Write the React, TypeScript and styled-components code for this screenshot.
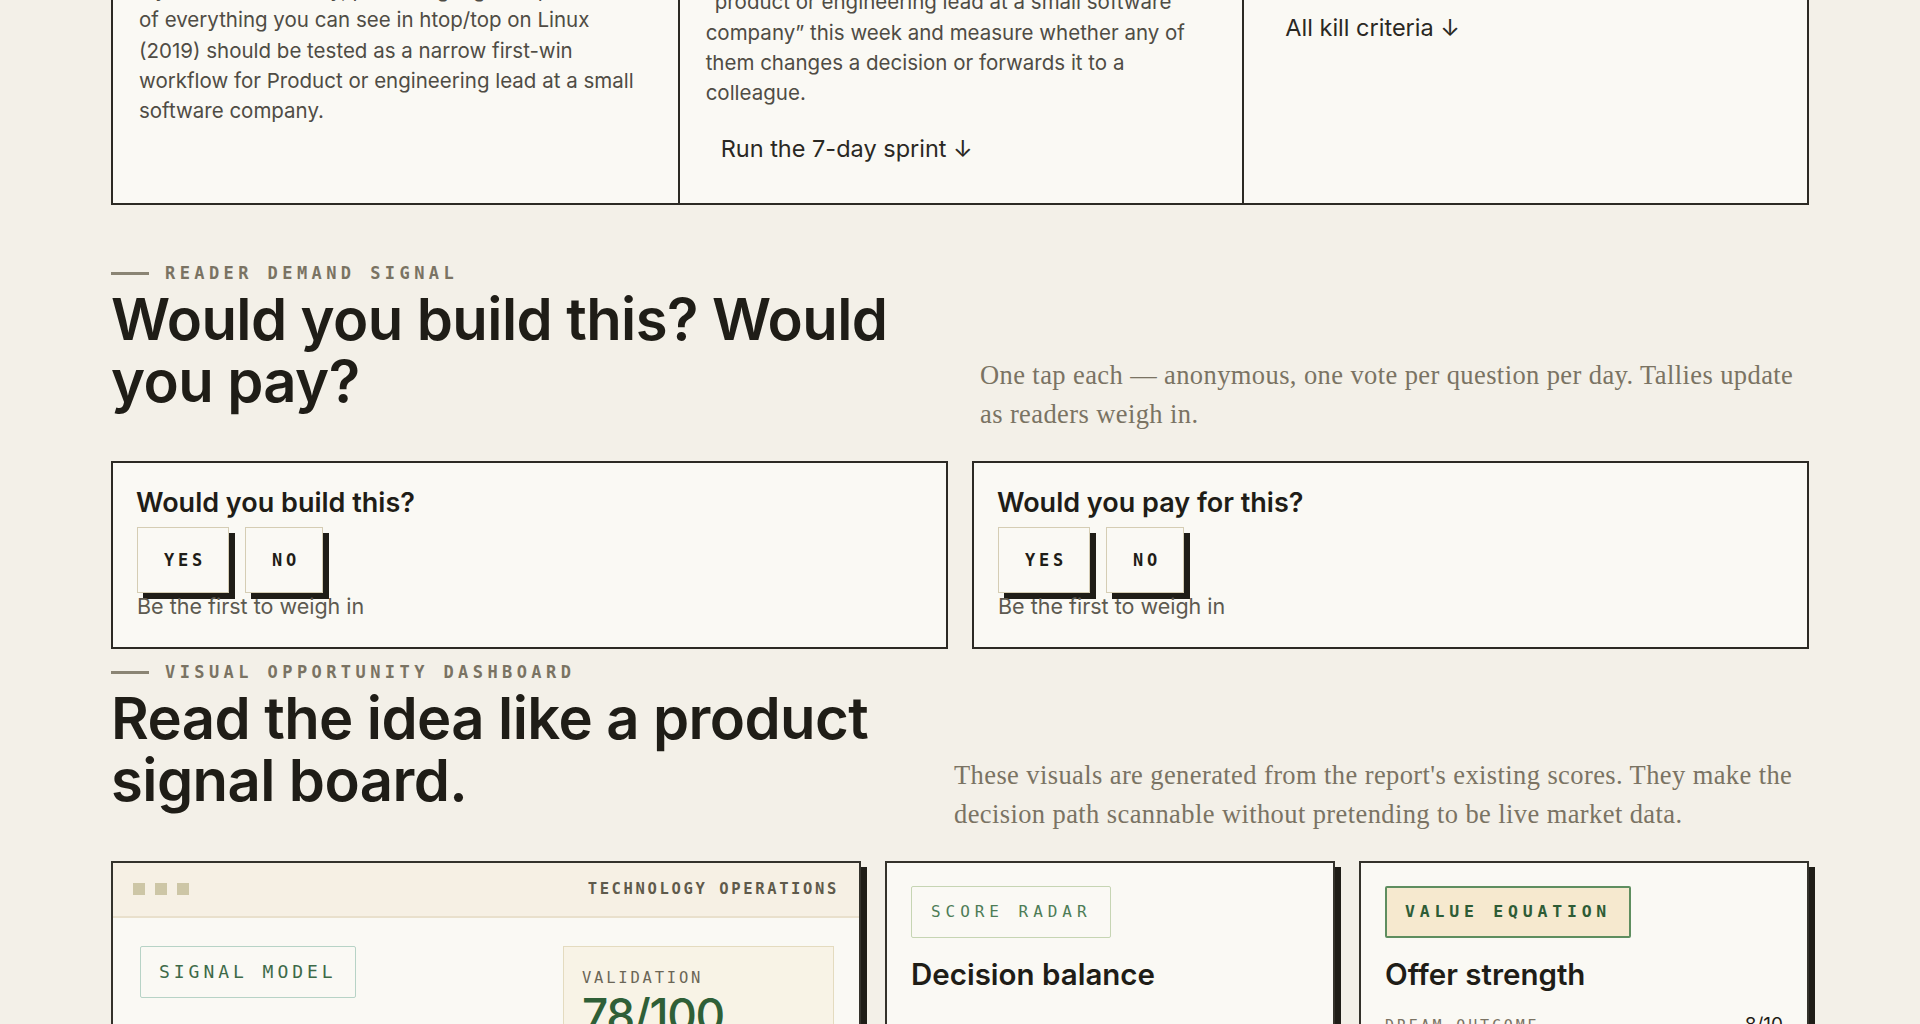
import React from "react";
import styled, { createGlobalStyle } from "styled-components";

const C = {
  bg: "#f3f0e8",
  card: "#faf9f4",
  ink: "#1f1d17",
  line: "#2c2a24",
  body: "#4f4c44",
  muted: "#7a7363",
  green: "#2f5f37",
};

const sans = `"Inter", "Liberation Sans", sans-serif`;
const mono = `"DejaVu Sans Mono", "Liberation Mono", monospace`;
const serif = `"Liberation Serif", "DejaVu Serif", serif`;

const Global = createGlobalStyle`
  html, body { margin: 0; padding: 0; background: ${C.bg}; overflow: hidden; }
  body { font-family: ${sans}; color: ${C.ink}; }
  * { box-sizing: border-box; }
`;

const Page = styled.main`
  width: 1698px;
  margin: -177px auto 0;
  padding-bottom: 200px;
`;

/* ---------- top summary grid ---------- */
const TopGrid = styled.section`
  display: grid;
  grid-template-columns: repeat(3, 1fr);
  border: 2px solid ${C.line};
  background: ${C.card};
`;

const Column = styled.div`
  display: flex;
  flex-direction: column;
  align-items: flex-start;
  padding: 28px 26px 31px;
  & + & {
    border-left: 2px solid ${C.line};
  }
`;

const ColKicker = styled.div`
  font-family: ${mono};
  font-size: 13px;
  line-height: 20px;
  letter-spacing: 0.2em;
  color: ${C.muted};
  text-transform: uppercase;
  margin-bottom: 12px;
`;

const ColTitle = styled.h3`
  margin: 0 0 12px;
  font-size: 24px;
  line-height: 30px;
  font-weight: 600;
`;

const ColText = styled.p<{ $gap?: number }>`
  margin: ${(p) => p.$gap ?? 0}px 0 0;
  font-size: 20.5px;
  line-height: 30.2px;
  color: ${C.body};
`;

const ColLink = styled.a`
  display: inline-block;
  margin-top: 18px;
  padding: 10px 15px;
  font-size: 23.5px;
  line-height: 26px;
  color: #2a2823;
  text-decoration: none;
  cursor: pointer;
`;

/* ---------- section heads ---------- */
const Section = styled.section<{ $mt: number }>`
  margin-top: ${(p) => p.$mt}px;
`;

const SectionHead = styled.div`
  display: flex;
  justify-content: space-between;
  align-items: flex-end;
  gap: 40px;
`;

const HeadMain = styled.div`
  max-width: 830px;
`;

const Eyebrow = styled.div`
  display: flex;
  align-items: center;
  gap: 16px;
  font-family: ${mono};
  font-size: 17px;
  font-weight: 700;
  line-height: 20px;
  letter-spacing: 0.26em;
  color: ${C.muted};
  text-transform: uppercase;
  &::before {
    content: "";
    width: 38px;
    height: 3px;
    background: #8a8474;
  }
`;

const H2 = styled.h2`
  margin: 6px 0 22px;
  font-size: 58px;
  line-height: 61.6px;
  font-weight: 600;
  letter-spacing: -0.01em;
  color: ${C.ink};
`;

const Lede = styled.p<{ $w: number }>`
  width: ${(p) => p.$w}px;
  flex: none;
  margin: 0;
  font-family: ${serif};
  font-size: 26.5px;
  letter-spacing: 0.4px;
  line-height: 39px;
  color: ${C.muted};
`;

/* ---------- votes ---------- */
const VoteGrid = styled.div`
  display: grid;
  grid-template-columns: 1fr 1fr;
  gap: 24px;
  margin-top: 27px;
`;

const VoteCard = styled.div`
  border: 2px solid ${C.line};
  background: ${C.card};
  padding: 24px 23px 29px;
`;

const Question = styled.h3`
  margin: 0;
  font-size: 27px;
  line-height: 32px;
  font-weight: 600;
`;

const BtnRow = styled.div`
  display: flex;
  gap: 16px;
  margin-top: 8px;
  padding-left: 1px;
`;

const VoteBtn = styled.button`
  height: 66px;
  padding: 0 22px 0 26px;
  font-family: ${mono};
  font-size: 17px;
  font-weight: 700;
  letter-spacing: 0.22em;
  color: ${C.ink};
  background: ${C.card};
  border: 1px solid #d5cdb4;
  box-shadow: 6px 6px 0 ${C.ink};
  cursor: pointer;
`;

const Hint = styled.div`
  margin-top: 1px;
  padding-left: 1px;
  font-size: 21.5px;
  line-height: 24px;
  color: #5d5a50;
`;

/* ---------- dashboard ---------- */
const DashGrid = styled.div`
  display: grid;
  grid-template-columns: 5fr 3fr 3fr;
  gap: 24px;
  margin-top: 27px;
  align-items: start;
`;

const DashCard = styled.article`
  min-height: 420px;
  border: 2px solid #34322b;
  background: ${C.card};
  box-shadow: 6px 6px 0 ${C.ink};
`;

const BoardHeader = styled.header`
  height: 55px;
  display: flex;
  align-items: center;
  justify-content: space-between;
  padding: 0 20px 0 20px;
  background: #f6f0e4;
  border-bottom: 2px solid #e9e0cc;
`;

const Dots = styled.div`
  display: flex;
  gap: 10px;
`;

const Dot = styled.span`
  width: 12px;
  height: 12px;
  background: #cdc6a6;
`;

const HeaderLabel = styled.div`
  font-family: ${mono};
  font-size: 15.5px;
  font-weight: 700;
  letter-spacing: 0.17em;
  color: #5f5a4b;
`;

const BoardBody = styled.div`
  display: flex;
  justify-content: space-between;
  align-items: flex-start;
  padding: 28px 25px 24px 27px;
`;

type ChipKind = "signal" | "radar" | "value";

const Chip = styled.div<{ $kind: ChipKind }>`
  display: inline-block;
  height: 52px;
  font-family: ${mono};
  line-height: 20px;
  border-radius: 2px;
  ${(p) =>
    p.$kind === "signal"
      ? `padding: 15px 18px; font-size: 18px; letter-spacing: 0.22em; color: #3d6a48; border: 1px solid #b7d3c6; background: transparent;`
      : p.$kind === "radar"
      ? `padding: 15px 18px 15px 19px; font-size: 16px; letter-spacing: 0.31em; color: #4d7c56; border: 1px solid #c6d5b3; background: transparent;`
      : `padding: 14px 18px; font-size: 16.5px; font-weight: 700; letter-spacing: 0.29em; color: #2e5c36; border: 2px solid #5e8e5f; background: #f6e9cf;`}
`;

const ValidationBox = styled.div`
  width: 271px;
  padding: 21px 18px 24px;
  background: #f8f3e6;
  border: 1px solid #e4dbbf;
`;

const SmallLabel = styled.div`
  font-family: ${mono};
  font-size: 15.5px;
  line-height: 20px;
  letter-spacing: 0.18em;
  color: #6b6656;
`;

const BigScore = styled.div`
  margin-top: 2px;
  font-size: 46px;
  line-height: 50px;
  font-weight: 500;
  letter-spacing: -0.03em;
  color: ${C.green};
`;

const CardPad = styled.div`
  padding: 23px 24px 24px;
`;

const CardTitle = styled.h3`
  margin: 18px 0 0;
  font-size: 29.5px;
  line-height: 36px;
  font-weight: 600;
`;

const MetricRow = styled.div`
  display: flex;
  justify-content: space-between;
  align-items: baseline;
  margin-top: 21px;
`;

const MetricLabel = styled.span`
  font-family: ${mono};
  font-size: 15px;
  letter-spacing: 0.19em;
  color: ${C.muted};
`;

const MetricValue = styled.span`
  font-size: 19px;
  color: ${C.ink};
`;

export default function App() {
  return (
    <>
      <Global />
      <Page>
        <TopGrid>
          <Column>
            <ColKicker>The wedge</ColKicker>
            <ColTitle>Start narrow</ColTitle>
            <ColText $gap={18}>
              The first version — a lightweight, explain-it-to-me
              <br />
              layer that turns noisy, plain-language snapshots
              <br />
              of everything you can see in htop/top on Linux
              <br />
              (2019) should be tested as a narrow first-win
              <br />
              workflow for Product or engineering lead at a small
              <br />
              software company.
            </ColText>
          </Column>
          <Column>
            <ColKicker>Next step</ColKicker>
            <ColTitle>Validate in a week</ColTitle>
            <ColText>
              Hand-write five digests from real machines and
              <br />
              send them to five people who match the
              <br />
              “product or engineering lead at a small software
              <br />
              company” this week and measure whether any of
              <br />
              them changes a decision or forwards it to a
              <br />
              colleague.
            </ColText>
            <ColLink>Run the 7-day sprint ↓</ColLink>
          </Column>
          <Column>
            <ColKicker>Stop signal</ColKicker>
            <ColTitle>Know when to quit</ColTitle>
            <ColText>
              If nobody forwards a digest or asks for the
              <br />
              next one within the sprint, park the idea.
            </ColText>
            <ColLink>All kill criteria ↓</ColLink>
          </Column>
        </TopGrid>

        <Section $mt={58}>
          <SectionHead>
            <HeadMain>
              <Eyebrow>Reader demand signal</Eyebrow>
              <H2>Would you build this? Would you pay?</H2>
            </HeadMain>
            <Lede $w={829}>
              One tap each — anonymous, one vote per question per day. Tallies update as readers weigh in.
            </Lede>
          </SectionHead>
          <VoteGrid>
            <VoteCard>
              <Question>Would you build this?</Question>
              <BtnRow>
                <VoteBtn>YES</VoteBtn>
                <VoteBtn>NO</VoteBtn>
              </BtnRow>
              <Hint>Be the first to weigh in</Hint>
            </VoteCard>
            <VoteCard>
              <Question>Would you pay for this?</Question>
              <BtnRow>
                <VoteBtn>YES</VoteBtn>
                <VoteBtn>NO</VoteBtn>
              </BtnRow>
              <Hint>Be the first to weigh in</Hint>
            </VoteCard>
          </VoteGrid>
        </Section>

        <Section $mt={13}>
          <SectionHead>
            <HeadMain>
              <Eyebrow>Visual opportunity dashboard</Eyebrow>
              <H2>Read the idea like a product signal board.</H2>
            </HeadMain>
            <Lede $w={855}>
              These visuals are generated from the report's existing scores. They make the decision path scannable
              without pretending to be live market data.
            </Lede>
          </SectionHead>
          <DashGrid>
            <DashCard>
              <BoardHeader>
                <Dots>
                  <Dot />
                  <Dot />
                  <Dot />
                </Dots>
                <HeaderLabel>TECHNOLOGY OPERATIONS</HeaderLabel>
              </BoardHeader>
              <BoardBody>
                <Chip $kind="signal">SIGNAL MODEL</Chip>
                <ValidationBox>
                  <SmallLabel>VALIDATION</SmallLabel>
                  <BigScore>78/100</BigScore>
                </ValidationBox>
              </BoardBody>
            </DashCard>
            <DashCard>
              <CardPad>
                <Chip $kind="radar">SCORE RADAR</Chip>
                <CardTitle>Decision balance</CardTitle>
              </CardPad>
            </DashCard>
            <DashCard>
              <CardPad>
                <Chip $kind="value">VALUE EQUATION</Chip>
                <CardTitle>Offer strength</CardTitle>
                <MetricRow>
                  <MetricLabel>DREAM OUTCOME</MetricLabel>
                  <MetricValue>8/10</MetricValue>
                </MetricRow>
              </CardPad>
            </DashCard>
          </DashGrid>
        </Section>
      </Page>
    </>
  );
}
